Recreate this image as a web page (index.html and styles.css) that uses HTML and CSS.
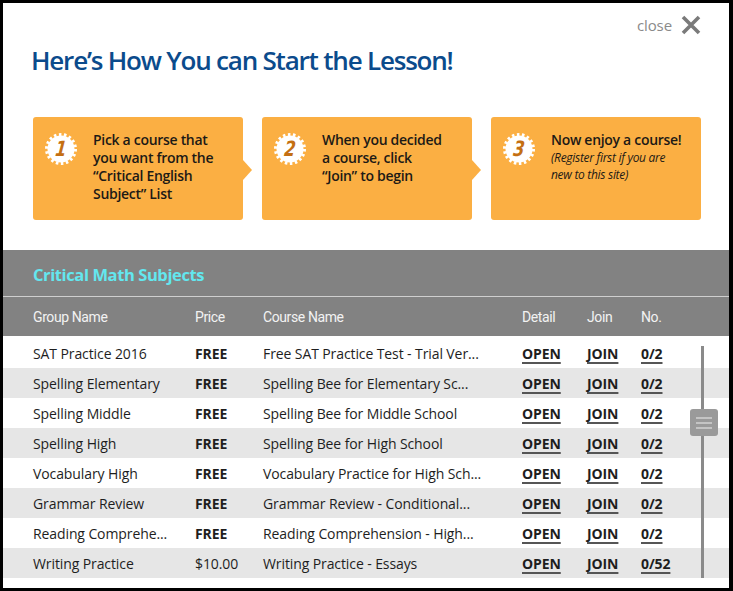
FILE: index.html
```html
<!DOCTYPE html>
<html>
<head>
<meta charset="utf-8">
<link rel="stylesheet" href="styles.css">
</head>
<body>
<div class="modal">
  <div class="close-row">
    <span class="close-text">close</span>
    <svg class="close-x" width="20" height="20" viewBox="0 0 20 20"><path d="M2 2 L18 18 M18 2 L2 18" stroke="#7a7a7a" stroke-width="3.6" stroke-linecap="butt"/></svg>
  </div>
  <h1 class="title">Here’s How You can Start the Lesson!</h1>
  <div class="steps">
    <div class="step arrow">
      <div class="badge"><svg width="34" height="34" viewBox="0 0 34 34"><circle cx="17" cy="17" r="13.5" fill="#fff"/><circle cx="17" cy="17" r="14.5" fill="none" stroke="#fff" stroke-width="3" stroke-dasharray="2.53 2.53"/></svg><span class="num">1</span></div>
      <div class="step-text">Pick a course that you want from the “Critical English Subject” List</div>
    </div>
    <div class="step arrow">
      <div class="badge"><svg width="34" height="34" viewBox="0 0 34 34"><circle cx="17" cy="17" r="13.5" fill="#fff"/><circle cx="17" cy="17" r="14.5" fill="none" stroke="#fff" stroke-width="3" stroke-dasharray="2.53 2.53"/></svg><span class="num">2</span></div>
      <div class="step-text">When you decided a course, click “Join” to begin</div>
    </div>
    <div class="step">
      <div class="badge"><svg width="34" height="34" viewBox="0 0 34 34"><circle cx="17" cy="17" r="13.5" fill="#fff"/><circle cx="17" cy="17" r="14.5" fill="none" stroke="#fff" stroke-width="3" stroke-dasharray="2.53 2.53"/></svg><span class="num">3</span></div>
      <div class="step-text wide">Now enjoy a course!<em class="note">(Register first if you are new to this site)</em></div>
    </div>
  </div>
  <div class="subjects">
    <div class="subjects-title">Critical Math Subjects</div>
    <div class="grid head">
      <span>Group Name</span><span>Price</span><span>Course Name</span><span>Detail</span><span>Join</span><span>No.</span>
    </div>
  </div>
  <div class="rows">
    <div class="grid row"><span>SAT Practice 2016</span><b>FREE</b><span>Free SAT Practice Test - Trial Ver...</span><a>OPEN</a><a>JOIN</a><a>0/2</a></div>
    <div class="grid row alt"><span>Spelling Elementary</span><b>FREE</b><span>Spelling Bee for Elementary Sc...</span><a>OPEN</a><a>JOIN</a><a>0/2</a></div>
    <div class="grid row"><span>Spelling Middle</span><b>FREE</b><span>Spelling Bee for Middle School</span><a>OPEN</a><a>JOIN</a><a>0/2</a></div>
    <div class="grid row alt"><span>Spelling High</span><b>FREE</b><span>Spelling Bee for High School</span><a>OPEN</a><a>JOIN</a><a>0/2</a></div>
    <div class="grid row"><span>Vocabulary High</span><b>FREE</b><span>Vocabulary Practice for High Sch...</span><a>OPEN</a><a>JOIN</a><a>0/2</a></div>
    <div class="grid row alt"><span>Grammar Review</span><b>FREE</b><span>Grammar Review - Conditional...</span><a>OPEN</a><a>JOIN</a><a>0/2</a></div>
    <div class="grid row"><span>Reading Comprehe...</span><b>FREE</b><span>Reading Comprehension - High...</span><a>OPEN</a><a>JOIN</a><a>0/2</a></div>
    <div class="grid row alt"><span>Writing Practice</span><span>$10.00</span><span>Writing Practice - Essays</span><a>OPEN</a><a>JOIN</a><a>0/52</a></div>
    <div class="scrollbar"><div class="track"></div><div class="thumb"><i></i><i></i><i></i></div></div>
  </div>
</div>
</body>
</html>
```
FILE: styles.css
```css
* { box-sizing: border-box; }
html, body { margin: 0; padding: 0; background: #000; }
.modal {
  width: 733px;
  height: 591px;
  background: #fff;
  border: 3px solid #000;
  border-right-width: 4px;
  position: relative;
  overflow: hidden;
  font-family: "Open Sans", sans-serif;
}
.close-row {
  display: flex;
  justify-content: flex-end;
  align-items: center;
  gap: 9px;
  padding: 12px 28px 0 0;
  height: 32px;
}
.close-text {
  color: #8a8a8a;
  font-size: 15px;
  letter-spacing: -0.1px;
}
.close-x { display: block; }
.title {
  margin: 10px 0 0 28px;
  font-family: "Open Sans", sans-serif;
  font-weight: 600;
  font-size: 26px;
  letter-spacing: -1.2px;
  color: #0b4b8c;
  line-height: 30px;
}
.steps {
  display: flex;
  gap: 19px;
  padding: 0 0 0 30px;
  margin-top: 42px;
}
.step {
  width: 210px;
  height: 103px;
  background: #fbaf43;
  border-radius: 3px;
  position: relative;
  display: flex;
  padding: 14px 8px 0 11px;
}
.step.arrow::after {
  content: "";
  position: absolute;
  right: -9px;
  top: 43px;
  border-top: 10px solid transparent;
  border-bottom: 10px solid transparent;
  border-left: 9px solid #fbaf43;
}
.badge {
  width: 34px;
  height: 34px;
  position: relative;
  flex: none;
  margin-top: 1px;
}
.badge svg { display: block; }
.num {
  position: absolute;
  inset: 0;
  display: flex;
  align-items: center;
  justify-content: center;
  font-family: "DejaVu Sans Condensed", "DejaVu Sans", sans-serif;
  font-weight: bold;
  font-style: italic;
  font-size: 21px;
  color: #c46f12;
  transform: skewX(-6deg) scaleX(0.85);
}
.step-text {
  margin-left: 15px;
  width: 126px;
  font-size: 14px;
  font-weight: 600;
  line-height: 18px;
  color: #1d1a16;
  letter-spacing: -0.3px;
}
.step-text.wide { width: 138px; }
.note {
  display: block;
  width: 130px;
  font-weight: 400;
  font-size: 12px;
  line-height: 17px;
  letter-spacing: -0.3px;
}
.subjects {
  background: #828282;
  margin-top: 30px;
  height: 86px;
}
.subjects-title {
  color: #63e7ef;
  font-weight: 700;
  font-size: 16.5px;
  letter-spacing: -0.4px;
  padding: 13px 0 0 30px;
  height: 47px;
  border-bottom: 1px solid #cfcfcf;
}
.grid {
  display: grid;
  grid-template-columns: 162px 68px 259px 65px 54px 1fr;
  padding-left: 30px;
  align-items: center;
}
.head {
  height: 38px;
  padding-top: 1px;
  color: #f2f2f2;
  font-family: "Roboto", sans-serif;
  font-size: 14px;
  letter-spacing: -0.4px;
}
.rows {
  position: relative;
  padding-top: 2px;
}
.row {
  height: 30px;
  font-size: 14px;
  color: #1e1e1e;
  letter-spacing: -0.1px;
  white-space: nowrap;
}
.row.alt { background: #e6e6e6; }
.row b { font-weight: 700; }
.row a {
  justify-self: start;
  font-weight: 700;
  text-decoration: underline;
  text-decoration-color: #555;
  text-decoration-thickness: 2px;
  text-underline-offset: 3px;
  color: #1e1e1e;
}
.scrollbar {
  position: absolute;
  left: 687px;
  top: 10px;
  width: 28px;
  height: 232px;
}
.track {
  position: absolute;
  left: 11px;
  top: 0;
  width: 3px;
  height: 100%;
  background: #8a8a8a;
}
.thumb {
  position: absolute;
  left: 0;
  top: 63px;
  width: 28px;
  height: 27px;
  background: #9a9a9a;
  border-radius: 3px;
  display: flex;
  flex-direction: column;
  justify-content: center;
  align-items: center;
  gap: 3px;
}
.thumb i {
  display: block;
  width: 16px;
  height: 2px;
  background: #c4c4c4;
}
```
